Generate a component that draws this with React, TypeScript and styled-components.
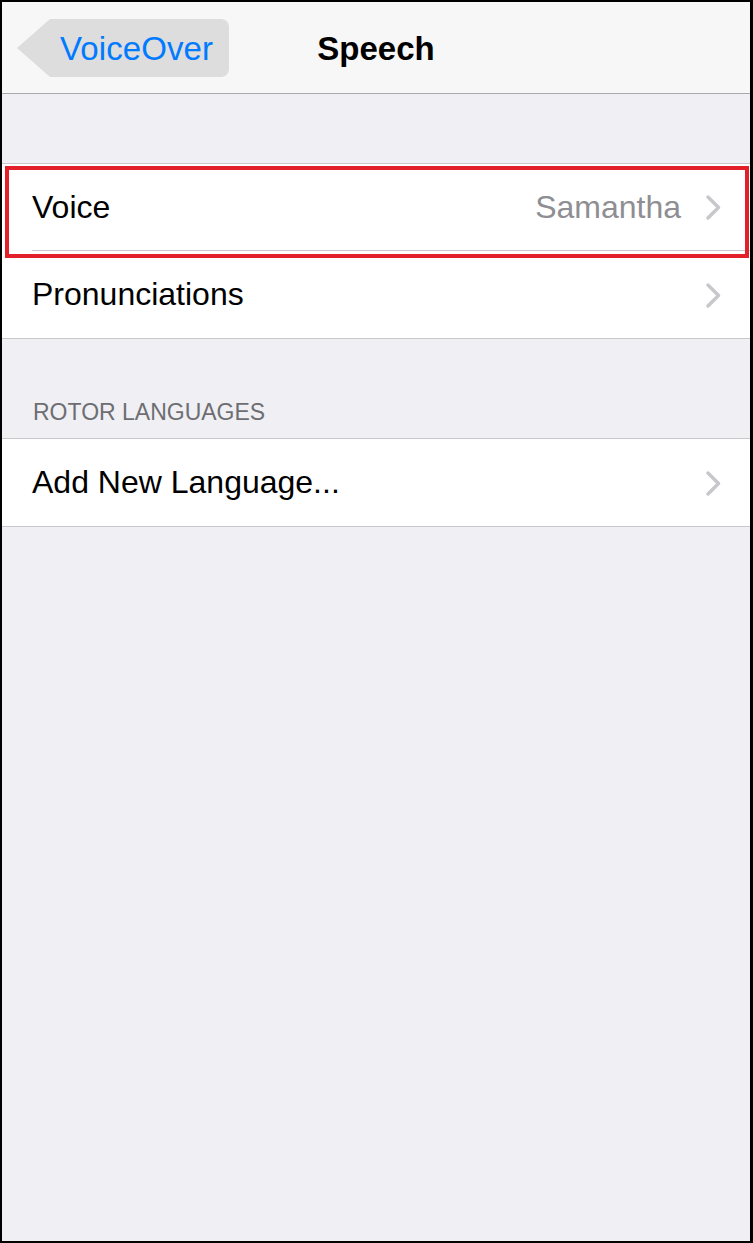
import React from 'react';
import styled, { createGlobalStyle } from 'styled-components';

type RowItem = {
    label: string
    detail?: string
    highlighted?: boolean
}

const GlobalStyle = createGlobalStyle`
    html, body {
        margin: 0;
        padding: 0;
        background: #000;
    }
    body {
        font-family: "Liberation Sans", Arial, sans-serif;
        -webkit-font-smoothing: antialiased;
    }
`

const speechRows: Array<RowItem> = [
    { label: 'Voice', detail: 'Samantha', highlighted: true },
    { label: 'Pronunciations' },
]

const rotorRows: Array<RowItem> = [
    { label: 'Add New Language...' },
]

const Chevron = () => (
    <ChevronSvg width="15" height="25" viewBox="0 0 15 25">
        <polyline points="2,2 12.5,12.5 2,23" fill="none" stroke="#c7c7cc" strokeWidth="3.4" strokeLinecap="round" strokeLinejoin="round" />
    </ChevronSvg>
)

const Row = (props: { item: RowItem, last: boolean }) => {
    const { item, last } = props
    return (
        <RowWrapper highlighted={item.highlighted}>
            <RowInner last={last}>
                <RowLabel>{item.label}</RowLabel>
                <RowRight>
                    {item.detail ? <RowDetail>{item.detail}</RowDetail> : ""}
                    <Chevron />
                </RowRight>
            </RowInner>
        </RowWrapper>
    )
}

const Group = (props: { rows: Array<RowItem> }) => (
    <GroupContainer>
        {props.rows.map((r, i) => (
            <Row key={r.label} item={r} last={i === props.rows.length - 1} />
        ))}
    </GroupContainer>
)

const App = () => {
    return (
        <>
            <GlobalStyle />
            <Screen>
                <NavBar>
                    <NavLeft>
                        <BackButton>VoiceOver</BackButton>
                    </NavLeft>
                    <NavTitle>Speech</NavTitle>
                    <div />
                </NavBar>
                <TopSpacer />
                <Group rows={speechRows} />
                <SectionHeader>ROTOR LANGUAGES</SectionHeader>
                <Group rows={rotorRows} />
            </Screen>
        </>
    )
}

const Screen = styled.div`
    width: 753px;
    height: 1243px;
    box-sizing: border-box;
    border-style: solid;
    border-color: #000;
    border-width: 2px 3px 2px 2px;
    background-color: #efeff4;
    display: flex;
    flex-direction: column;
    overflow: hidden;
`

const NavBar = styled.div`
    height: 91px;
    background-color: #f7f7f7;
    border-bottom: 1px solid #a9a9ad;
    display: grid;
    grid-template-columns: 1fr auto 1fr;
    align-items: center;
    flex-shrink: 0;
`

const NavLeft = styled.div`
    padding-left: 15px;
    display: flex;
    align-items: center;
`

const BackButton = styled.div`
    height: 58px;
    box-sizing: border-box;
    margin-top: 1px;
    padding: 2px 16px 0 43px;
    display: flex;
    align-items: center;
    background-color: #dddddd;
    border-radius: 8px;
    clip-path: polygon(33px 0, 100% 0, 100% 100%, 33px 100%, 0 50%);
    color: #007aff;
    font-size: 33px;
    letter-spacing: 0.1px;
`

const NavTitle = styled.div`
    font-size: 33px;
    font-weight: bold;
    color: #000;
    margin-top: 3px;
`

const TopSpacer = styled.div`
    height: 69px;
    flex-shrink: 0;
`

const GroupContainer = styled.div`
    background-color: #fff;
    border-top: 1px solid #c8c7cc;
    border-bottom: 1px solid #c8c7cc;
    flex-shrink: 0;
`

const RowWrapper = styled.div<{ highlighted?: boolean }>`
    position: relative;
    padding-left: 30px;
    &::after {
        content: "";
        display: ${p => p.highlighted ? 'block' : 'none'};
        position: absolute;
        top: 2px;
        left: 3px;
        right: 1px;
        bottom: -7px;
        border: 4px solid #e3202a;
        z-index: 2;
        pointer-events: none;
    }
`

const RowInner = styled.div<{ last: boolean }>`
    height: ${p => p.last ? '87px' : '86px'};
    display: flex;
    align-items: center;
    justify-content: space-between;
    padding-right: 29px;
    border-bottom: ${p => p.last ? 'none' : '1px solid #c8c7cc'};
`

const RowLabel = styled.span`
    font-size: 32px;
    color: #000;
`

const RowRight = styled.div`
    display: flex;
    align-items: center;
    gap: 25px;
`

const RowDetail = styled.span`
    font-size: 32px;
    color: #8e8e93;
`

const ChevronSvg = styled.svg`
    display: block;
    margin-top: 1px;
`

const SectionHeader = styled.div`
    height: 99px;
    box-sizing: border-box;
    display: flex;
    align-items: flex-end;
    padding: 0 0 12px 31px;
    font-size: 23px;
    line-height: 28px;
    color: #6d6d72;
    flex-shrink: 0;
`

export default App
